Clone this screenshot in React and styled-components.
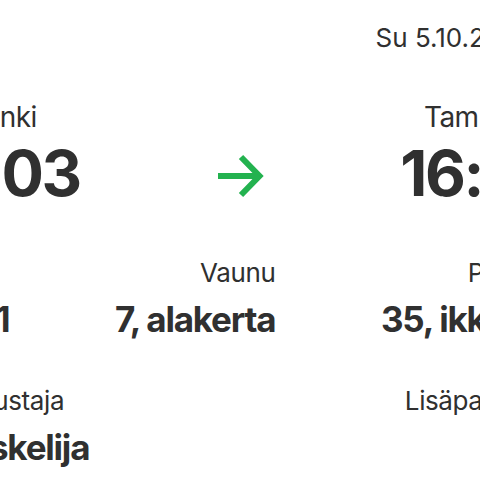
import React from 'react'
import styled, { createGlobalStyle } from 'styled-components'

const GlobalStyle = createGlobalStyle`
    html, body {
        margin: 0;
        padding: 0;
        background: #ffffff;
        overflow: hidden;
    }
    body {
        font-family: Inter, "Liberation Sans", Arial, sans-serif;
        color: #303030;
    }
`

const Page = styled.div`
    width: 480px;
    display: flex;
    justify-content: center;
`

const Ticket = styled.div`
    flex: none;
    width: 720px;
    padding-top: 22px;
    box-sizing: border-box;
`

const Header = styled.div`
    display: flex;
    justify-content: flex-end;
    padding-right: 67px;
`

const DateText = styled.div`
    font-size: 26px;
    line-height: 32px;
`

const Route = styled.div`
    display: grid;
    grid-template-columns: repeat(3, 1fr);
    margin-top: 46px;
`

const Stop = styled.div`
    display: flex;
    flex-direction: column;
    align-items: center;
    gap: 5px;
    white-space: nowrap;
`

const StationName = styled.div`
    font-size: 28px;
    line-height: 34px;
    letter-spacing: -0.6px;
    margin-right: ${p => p.$offset || 0}px;
`

const Time = styled.div`
    font-size: 63px;
    line-height: 68px;
    font-weight: 700;
    letter-spacing: -2.5px;
`

const ArrowCell = styled.div`
    justify-self: center;
    align-self: start;
    margin-top: 52px;
    display: flex;
`

const DetailRow = styled.div`
    display: flex;
    justify-content: space-between;
    padding: 0 54px;
    margin-top: ${p => p.$top}px;
`

const Field = styled.div`
    display: flex;
    flex-direction: column;
    gap: 10px;
    align-items: ${p => (p.$right ? 'flex-end' : 'flex-start')};
    white-space: nowrap;
`

const Label = styled.div`
    font-size: 26px;
    line-height: 30px;
    letter-spacing: -0.4px;
`

const Value = styled.div`
    font-size: 35px;
    line-height: 42px;
    font-weight: 700;
    letter-spacing: -1.2px;
`

const Arrow = () => (
    <svg width="48" height="48" viewBox="0 0 48 48" fill="none">
        <path
            d="M2 24 H42 M25 5 L43.5 24 L25 43"
            stroke="#23b24f"
            strokeWidth="6"
            strokeLinecap="butt"
            strokeLinejoin="miter"
        />
    </svg>
)

export default function App() {
    return (
        <>
            <GlobalStyle />
            <Page>
                <Ticket>
                    <Header>
                        <DateText>Su 5.10.2025</DateText>
                    </Header>

                    <Route>
                        <Stop>
                            <StationName $offset={26}>Helsinki</StationName>
                            <Time>15:03</Time>
                        </Stop>
                        <ArrowCell>
                            <Arrow />
                        </ArrowCell>
                        <Stop>
                            <StationName>Tampere</StationName>
                            <Time>16:50</Time>
                        </Stop>
                    </Route>

                    <DetailRow $top={51}>
                        <Field>
                            <Label>Juna</Label>
                            <Value>IC 51</Value>
                        </Field>
                        <Field $right>
                            <Label>Vaunu</Label>
                            <Value>7, alakerta</Value>
                        </Field>
                        <Field $right>
                            <Label>Paikka</Label>
                            <Value>35, ikkuna</Value>
                        </Field>
                    </DetailRow>

                    <DetailRow $top={46}>
                        <Field>
                            <Label>Matkustaja</Label>
                            <Value>Opiskelija</Value>
                        </Field>
                        <Field $right>
                            <Label>Lisäpalvelut</Label>
                            <Value>Ei</Value>
                        </Field>
                    </DetailRow>
                </Ticket>
            </Page>
        </>
    )
}
